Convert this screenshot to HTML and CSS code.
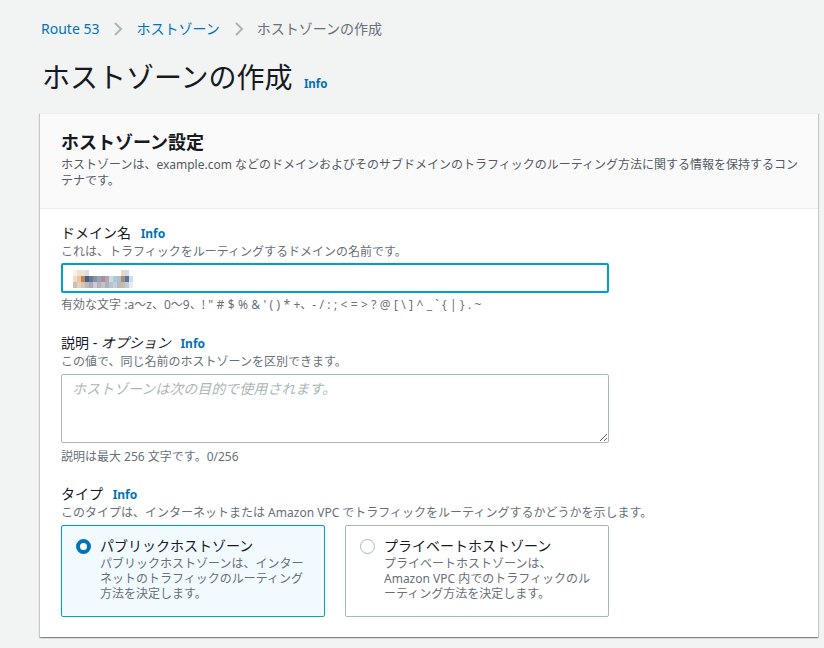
FILE: index.html
```html
<!DOCTYPE html>
<html lang="ja">
<head>
<meta charset="utf-8">
<title>ホストゾーンの作成</title>
<link rel="stylesheet" href="styles.css">
</head>
<body>
<div class="page">
  <nav class="breadcrumb">
    <a class="crumb" href="#">Route 53</a>
    <svg class="chev" width="10" height="16" viewBox="0 0 10 16"><polyline points="2,2 8,8 2,14" fill="none" stroke="#aab7b8" stroke-width="2"/></svg>
    <a class="crumb" href="#">ホストゾーン</a>
    <svg class="chev" width="10" height="16" viewBox="0 0 10 16"><polyline points="2,2 8,8 2,14" fill="none" stroke="#aab7b8" stroke-width="2"/></svg>
    <span class="crumb current">ホストゾーンの作成</span>
  </nav>

  <h1 class="title">ホストゾーンの作成 <a class="info" href="#">Info</a></h1>

  <section class="panel">
    <header class="panel-head">
      <h2 class="panel-title">ホストゾーン設定</h2>
      <p class="panel-desc">ホストゾーンは、example.com などのドメインおよびそのサブドメインのトラフィックのルーティング方法に関する情報を保持するコンテナです。</p>
    </header>
    <div class="panel-body">
      <div class="field">
        <div class="label">ドメイン名 <a class="info" href="#">Info</a></div>
        <div class="desc">これは、トラフィックをルーティングするドメインの名前です。</div>
        <div class="input focused">
          <svg class="mosaic" width="68" height="18" viewBox="0 0 68 18">
            <g>
              <rect x="0" y="0" width="4" height="6" fill="#fbf1e8"/>
              <rect x="4" y="0" width="4" height="6" fill="#f4e0cc"/>
              <rect x="8" y="0" width="4" height="6" fill="#f2e2d4"/>
              <rect x="12" y="0" width="4" height="6" fill="#dcdcec"/>
              <rect x="48" y="0" width="4" height="6" fill="#ecd6c4"/>
              <rect x="52" y="0" width="4" height="6" fill="#d0dcec"/>
              <rect x="0" y="6" width="4" height="6" fill="#f2dcc8"/>
              <rect x="4" y="6" width="4" height="6" fill="#e6c6a6"/>
              <rect x="8" y="6" width="4" height="6" fill="#c48650"/>
              <rect x="12" y="6" width="4" height="6" fill="#4a5c8a"/>
              <rect x="16" y="6" width="4" height="6" fill="#6a7898"/>
              <rect x="20" y="6" width="4" height="6" fill="#8890a8"/>
              <rect x="24" y="6" width="4" height="6" fill="#9aa2ba"/>
              <rect x="28" y="6" width="4" height="6" fill="#a88e98"/>
              <rect x="32" y="6" width="4" height="6" fill="#bca2aa"/>
              <rect x="36" y="6" width="4" height="6" fill="#c4dcec"/>
              <rect x="40" y="6" width="4" height="6" fill="#a8c8e0"/>
              <rect x="44" y="6" width="4" height="6" fill="#b4bccc"/>
              <rect x="48" y="6" width="4" height="6" fill="#a88e7c"/>
              <rect x="52" y="6" width="4" height="6" fill="#4a78b0"/>
              <rect x="56" y="6" width="4" height="6" fill="#d0dcec"/>
              <rect x="0" y="12" width="4" height="6" fill="#cac0b6"/>
              <rect x="4" y="12" width="4" height="6" fill="#e2d2c2"/>
              <rect x="8" y="12" width="4" height="6" fill="#d8c6b4"/>
              <rect x="12" y="12" width="4" height="6" fill="#c2b8ba"/>
              <rect x="16" y="12" width="4" height="6" fill="#aaaabc"/>
              <rect x="20" y="12" width="4" height="6" fill="#cacad2"/>
              <rect x="24" y="12" width="4" height="6" fill="#b8b0b8"/>
              <rect x="28" y="12" width="4" height="6" fill="#c2c2ca"/>
              <rect x="32" y="12" width="4" height="6" fill="#aab2c2"/>
              <rect x="36" y="12" width="4" height="6" fill="#bac2ca"/>
              <rect x="40" y="12" width="4" height="6" fill="#cacad2"/>
              <rect x="44" y="12" width="4" height="6" fill="#b2bac2"/>
              <rect x="48" y="12" width="4" height="6" fill="#cabaa8"/>
              <rect x="52" y="12" width="4" height="6" fill="#c2cada"/>
              <rect x="56" y="12" width="4" height="6" fill="#e6eaf2"/>
            </g>
          </svg>
        </div>
        <div class="hint">有効な文字 :a〜z、0〜9、! " # $ % &amp; ' ( ) * +、- / : ; &lt; = &gt; ? @ [ \ ] ^ _ ` { | } . ~</div>
      </div>

      <div class="field">
        <div class="label">説明 - <i>オプション</i> <a class="info" href="#">Info</a></div>
        <div class="desc">この値で、同じ名前のホストゾーンを区別できます。</div>
        <textarea class="textarea" placeholder="ホストゾーンは次の目的で使用されます。"></textarea>
        <div class="hint counter">説明は最大 256 文字です。0/256</div>
      </div>

      <div class="field field-type">
        <div class="label">タイプ <a class="info" href="#">Info</a></div>
        <div class="desc">このタイプは、インターネットまたは Amazon VPC でトラフィックをルーティングするかどうかを示します。</div>
        <div class="tiles">
          <div class="tile selected">
            <span class="radio checked"></span>
            <div class="tile-text">
              <div class="tile-title">パブリックホストゾーン</div>
              <div class="tile-desc">パブリックホストゾーンは、インターネットのトラフィックのルーティング方法を決定します。</div>
            </div>
          </div>
          <div class="tile">
            <span class="radio"></span>
            <div class="tile-text">
              <div class="tile-title">プライベートホストゾーン</div>
              <div class="tile-desc">プライベートホストゾーンは、Amazon VPC 内でのトラフィックのルーティング方法を決定します。</div>
            </div>
          </div>
        </div>
      </div>
    </div>
  </section>
</div>
</body>
</html>
```

FILE: styles.css
```css
* { box-sizing: border-box; }
html, body {
  margin: 0;
  padding: 0;
  background: #f2f3f3;
  font-family: "Noto Sans", "Noto Sans CJK JP", sans-serif;
  color: #16191f;
}
.page {
  padding: 19px 6px 12px 40px;
}
.breadcrumb {
  display: flex;
  align-items: center;
  height: 20px;
  font-size: 14px;
  line-height: 20px;
  padding-left: 1px;
}
.crumb { color: #0073bb; text-decoration: none; }
.crumb.current { color: #687078; }
.chev { margin: 0 13px 0 14px; }
.title {
  margin: 20px 0 0 2px;
  font-size: 28px;
  line-height: 36px;
  font-weight: 400;
  color: #16191f;
}
.info {
  color: #0073bb;
  font-size: 12px;
  font-weight: 700;
  text-decoration: none;
  margin-left: 4px;
}
.title .info { font-size: 11.5px; margin-left: 4px; }
.panel {
  margin-top: 11px;
  background: #fff;
  border-top: 1px solid #eaeded;
  box-shadow: 0 1px 1px 0 rgba(0,28,36,.3), 1px 1px 1px 0 rgba(0,28,36,.15), -1px 1px 1px 0 rgba(0,28,36,.15);
}
.panel-head {
  background: #fafafa;
  border-bottom: 1px solid #eaeded;
  padding: 16px 8px 19px 21px;
}
.panel-title {
  margin: 0 0 3px;
  font-size: 18px;
  line-height: 24px;
  font-weight: 700;
}
.panel-desc {
  margin: 0;
  font-size: 12px;
  line-height: 16px;
  color: #545b64;
}
.panel-body {
  padding: 14px 20px 20px 21px;
}
.field + .field { margin-top: 20px; }
.field + .field-type { margin-top: 19px; }
.label {
  font-size: 14px;
  line-height: 20px;
}
.label .info { margin-left: 6px; }
.desc, .hint {
  font-size: 12px;
  line-height: 16px;
  color: #687078;
}
.input {
  margin-top: 3px;
  width: 548px;
  height: 30px;
  border: 1px solid #aab7b8;
  border-radius: 2px;
  padding: 0 10px;
  display: flex;
  align-items: center;
  font-size: 14px;
}
.input.focused {
  border: 2px solid #00a1c9;
}
.mosaic { display: block; margin-top: 1px; }
.hint { margin-top: 4px; word-spacing: 0.25px; }
.textarea {
  display: block;
  margin-top: 4px;
  width: 548px;
  height: 69px;
  border: 1px solid #aab7b8;
  border-radius: 2px;
  padding: 4px 10px;
  font-family: inherit;
  font-size: 14px;
  line-height: 20px;
  resize: vertical;
  background: #fff;
}
.textarea::placeholder {
  color: #aab7b8;
  font-style: italic;
}
.counter { margin-top: 6px; word-spacing: 0; }
.tiles {
  margin-top: 4px;
  display: flex;
  gap: 20px;
}
.tile {
  width: 264px;
  height: 92px;
  border: 1px solid #aab7b8;
  border-radius: 2px;
  padding: 10px 14px 0 14px;
  display: flex;
  gap: 9px;
  align-items: flex-start;
}
.tile.selected {
  border-color: #00a1c9;
  background: #f1faff;
}
.radio {
  flex: none;
  width: 15px;
  height: 15px;
  margin-top: 3px;
  border-radius: 50%;
  border: 1px solid #aab7b8;
  background: #fff;
}
.radio.checked {
  border: 4.5px solid #0073bb;
}
.tile-text { flex: 1; }
.tile-title {
  font-size: 14px;
  line-height: 20px;
  color: #16191f;
}
.tile-desc {
  font-size: 12px;
  line-height: 15px;
  color: #687078;
}
```
